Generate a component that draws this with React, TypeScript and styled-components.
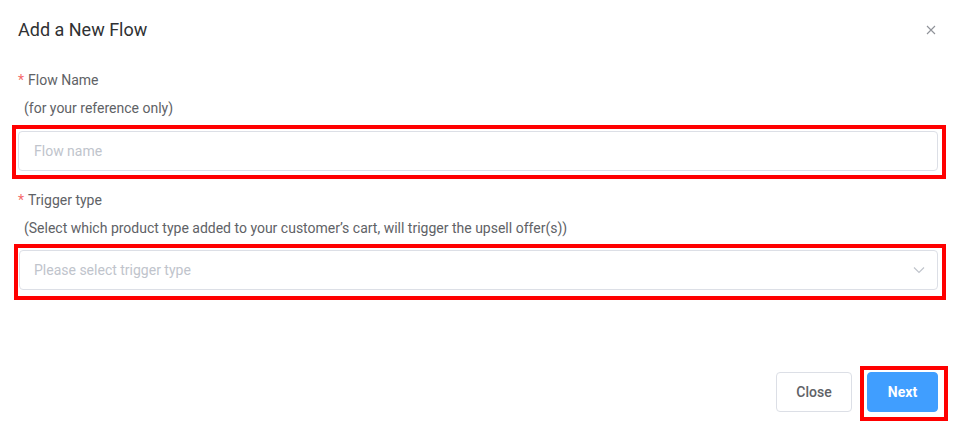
import React from "react";
import styled, { createGlobalStyle } from "styled-components";

const GlobalStyle = createGlobalStyle`
  html, body { margin: 0; padding: 0; background: #ffffff; }
  body { font-family: Roboto, "Liberation Sans", Arial, sans-serif; }
  * { box-sizing: border-box; }
`;

const Dialog = styled.div`
  width: 956px;
  height: 426px;
  background: #ffffff;
  display: flex;
  flex-direction: column;
  overflow: hidden;
`;

const Header = styled.div`
  display: flex;
  align-items: center;
  justify-content: space-between;
  padding: 18px 20px 0 18px;
`;

const Title = styled.h2`
  margin: 0;
  font-size: 18px;
  line-height: 24px;
  font-weight: 400;
  color: #303133;
`;

const CloseIcon = styled.button`
  border: 0;
  background: transparent;
  padding: 0;
  width: 10px;
  height: 10px;
  display: flex;
  align-items: center;
  justify-content: center;
  cursor: pointer;
`;

const Body = styled.div`
  display: flex;
  flex-direction: column;
  padding: 0 18px;
`;

const Label = styled.div<{ $mt: number }>`
  margin-top: ${(p) => p.$mt}px;
  font-size: 14px;
  line-height: 20px;
  color: #606266;
`;

const Required = styled.span`
  color: #f56c6c;
  margin-right: 4px;
`;

const Hint = styled.div`
  margin-top: 8px;
  padding-left: 6px;
  font-size: 14px;
  line-height: 20px;
  color: #606266;
`;

const Highlight = styled.div<{ $mt: number; $pad: string; $ml: number; $mr: number }>`
  margin-top: ${(p) => p.$mt}px;
  margin-left: ${(p) => p.$ml}px;
  margin-right: ${(p) => p.$mr}px;
  border: 4px solid #ff0000;
  padding: ${(p) => p.$pad};
`;

const TextInput = styled.input`
  display: block;
  width: 100%;
  height: 40px;
  border: 1px solid #dcdfe6;
  border-radius: 4px;
  padding: 0 15px;
  font-family: inherit;
  font-size: 14px;
  color: #606266;
  outline: none;
  &::placeholder { color: #c0c4cc; }
`;

const SelectBox = styled.div`
  display: flex;
  align-items: center;
  justify-content: space-between;
  width: 100%;
  height: 40px;
  border: 1px solid #dcdfe6;
  border-radius: 4px;
  padding: 0 12px 0 14px;
`;

const Placeholder = styled.span`
  font-size: 14px;
  color: #c0c4cc;
`;

const Footer = styled.div`
  display: flex;
  justify-content: flex-end;
  align-items: flex-start;
  margin-top: 66px;
  padding-right: 8px;
`;

const Button = styled.button<{ $primary?: boolean }>`
  height: 40px;
  border-radius: 4px;
  font-family: inherit;
  font-size: 14px;
  cursor: pointer;
  padding: 0;
  border: 1px solid ${(p) => (p.$primary ? "#409eff" : "#dcdfe6")};
  background: ${(p) => (p.$primary ? "#409eff" : "#ffffff")};
  color: ${(p) => (p.$primary ? "#ffffff" : "#606266")};
  font-weight: ${(p) => (p.$primary ? 700 : 500)};
`;

const CloseButton = styled(Button)`
  width: 76px;
  margin-top: 6px;
  margin-right: 8px;
`;

const NextButton = styled(Button)`
  display: block;
  width: 71px;
`;

const NextHighlight = styled.div`
  border: 4px solid #ff0000;
  padding: 2px 6px 5px 3px;
`;

export default function App() {
  return (
    <>
      <GlobalStyle />
      <Dialog>
        <Header>
          <Title>Add a New Flow</Title>
          <CloseIcon aria-label="close">
            <svg width="10" height="10" viewBox="0 0 10 10">
              <path d="M1 1L9 9M9 1L1 9" stroke="#909399" strokeWidth="1.1" />
            </svg>
          </CloseIcon>
        </Header>
        <Body>
          <Label $mt={28}>
            <Required>*</Required>Flow Name
          </Label>
          <Hint>(for your reference only)</Hint>
          <Highlight $mt={7} $ml={-6} $mr={-8} $pad="2px 4px 4px 2px">
            <TextInput placeholder="Flow name" />
          </Highlight>
          <Label $mt={11}>
            <Required>*</Required>Trigger type
          </Label>
          <Hint>(Select which product type added to your customer’s cart, will trigger the upsell offer(s))</Hint>
          <Highlight $mt={6} $ml={-4} $mr={-8} $pad="2px 4px 6px 1px">
            <SelectBox>
              <Placeholder>Please select trigger type</Placeholder>
              <svg width="12" height="8" viewBox="0 0 12 8">
                <path d="M1 1.5L6 6.5L11 1.5" fill="none" stroke="#c0c4cc" strokeWidth="1.2" />
              </svg>
            </SelectBox>
          </Highlight>
        </Body>
        <Footer>
          <CloseButton>Close</CloseButton>
          <NextHighlight>
            <NextButton $primary>Next</NextButton>
          </NextHighlight>
        </Footer>
      </Dialog>
    </>
  );
}
